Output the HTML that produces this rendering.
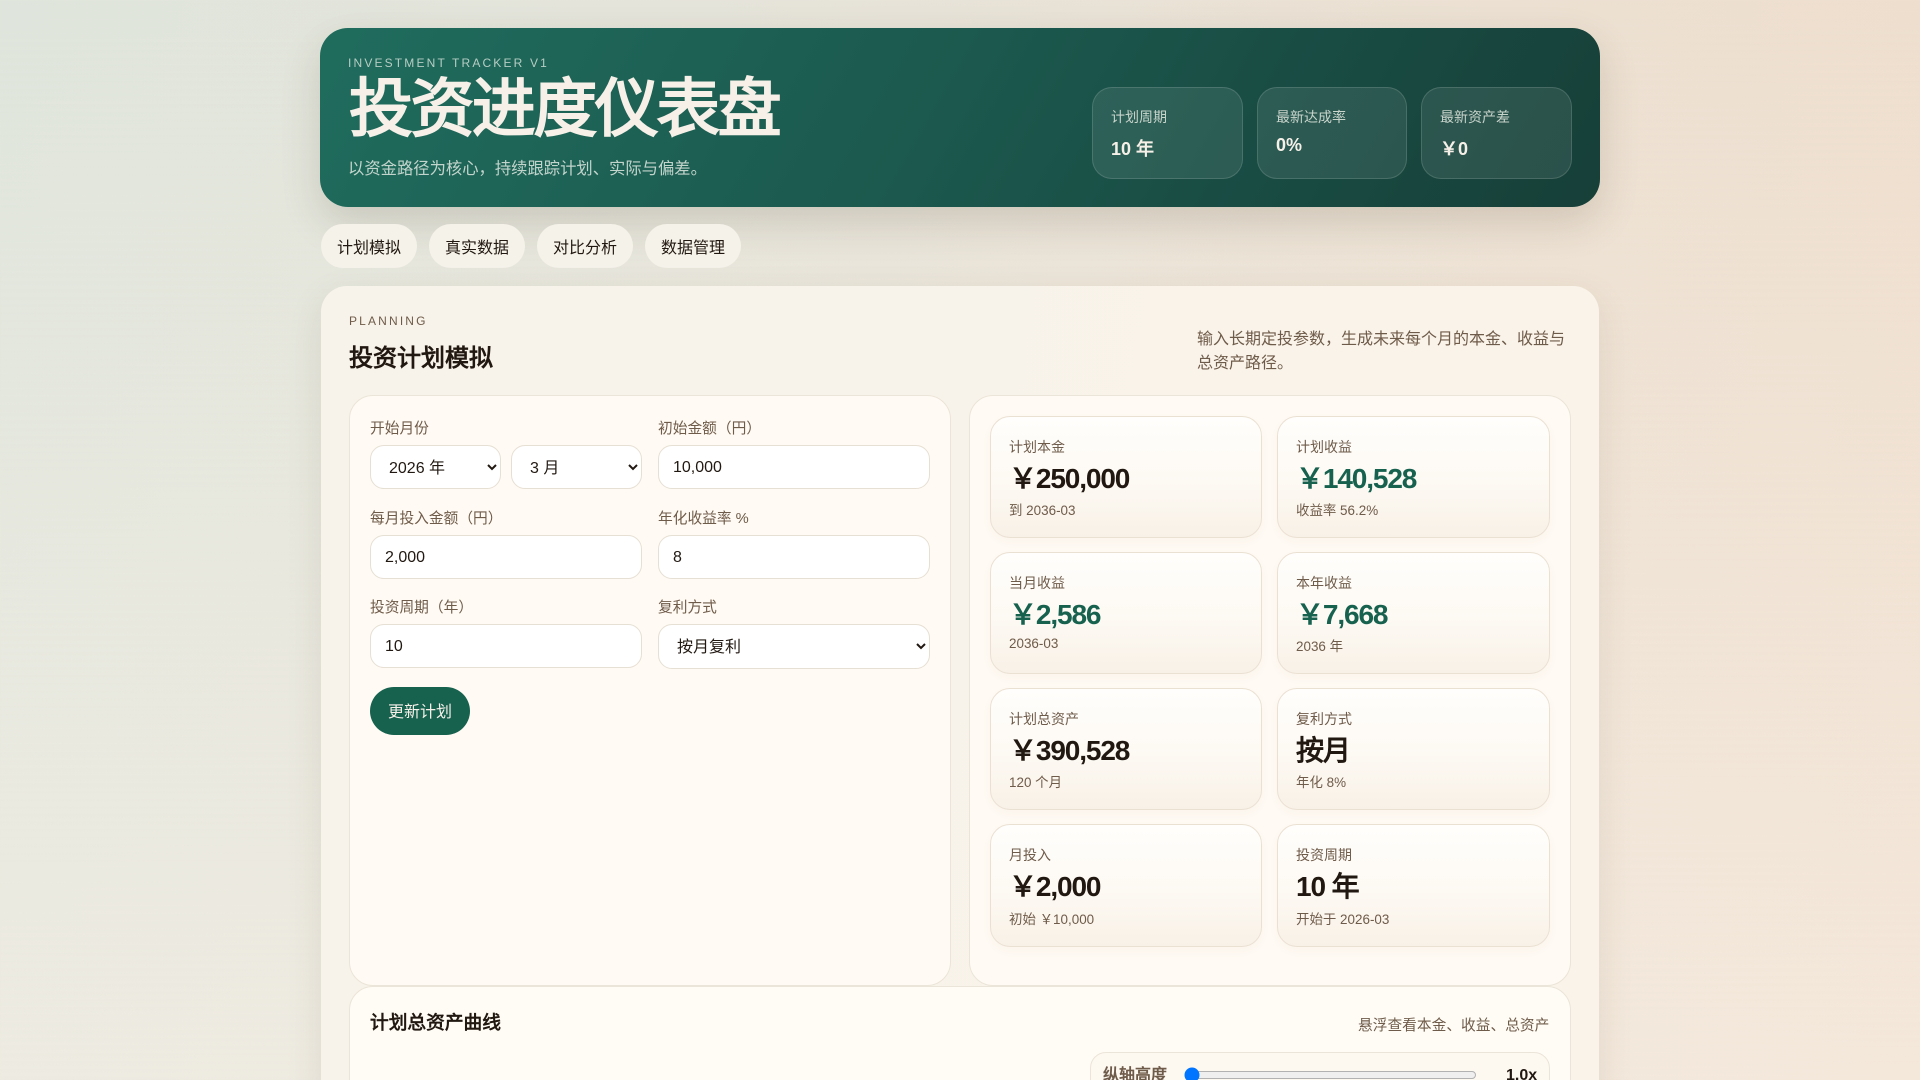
<!DOCTYPE html>
<html lang="zh-CN"><head><meta charset="utf-8"><title>投资进度仪表盘</title>
<style>
*{box-sizing:border-box}
html,body{margin:0;padding:0;width:1920px;height:1080px;overflow:hidden}
body{font-family:"Liberation Sans","WenQuanYi Zen Hei",sans-serif;color:#211811;font-size:16px;background:linear-gradient(180deg,rgba(248,240,230,0) 0%,rgba(248,240,230,.55) 100%),linear-gradient(95deg,#dfe5dc 0%,#e5e4da 35%,#e9e2d6 55%,#efdecd 100%);position:relative}
.abs,.abs>*{margin:0}
.abs{position:absolute}
.hero{left:320px;top:28px;width:1280px;height:179px;border-radius:28px;background:linear-gradient(120deg,#1f6c5d 0%,#1c5a4f 45%,#163f38 100%);box-shadow:0 16px 40px rgba(60,50,30,.16)}
.eyebrow{left:348px;top:56px;font-size:12px;letter-spacing:.18em;color:#b7cdc4;line-height:14px;white-space:nowrap}
h1.abs{left:349px;top:73px;font-size:64px;line-height:72px;letter-spacing:-.04em;font-weight:700;color:#f6f0e8;white-space:nowrap;margin:0}
.sub{left:348px;top:157px;font-size:16.32px;line-height:24px;color:#c3d4cc;white-space:nowrap}
.stat{top:87px;height:92px;width:151px;border-radius:20px;background:rgba(255,255,255,.085);border:1px solid rgba(255,255,255,.14);padding:19px 18px;color:#f6f0e8}
.stat .l{font-size:14px;color:#c9d4cb;margin-bottom:8px}
.stat .v{font-size:18px;font-weight:700}
.tab{top:224px;height:44px;width:96px;border-radius:22px;background:#f5f2ea;text-align:center;font-size:16px;line-height:50px;color:#211811}
.panel{left:321px;top:286px;width:1278px;height:830px;border-radius:26px;background:linear-gradient(100deg,#f7f3ea,#faf3e9);box-shadow:0 12px 36px rgba(80,60,30,.1)}
.pl{left:349px;top:314px;font-size:12px;letter-spacing:.18em;line-height:14px;color:#6f5b49;white-space:nowrap}
h2.abs{left:349px;top:341px;font-size:24px;line-height:36px;font-weight:700;margin:0;color:#211811;white-space:nowrap}
.desc{left:1197px;top:328px;width:372px;line-height:24px;color:#6f5b49;font-size:16px}
.card{background:#fffaf3;border:1px solid #ebe4d8;border-radius:24px}
.lab{font-size:14.72px;color:#6f5b49;line-height:20px;white-space:nowrap}
select,input[type=text]{position:absolute;font-family:inherit;font-size:16px;color:#211811;background:#fff;border:1px solid #e6dfd4;border-radius:14px;margin:0}
input[type=text]{padding:2px 14px 0}
select{padding:2px 10px 0 14px}
.btn{left:370px;top:687px;width:100px;height:48px;border-radius:24px;background:#17614f;color:#f6f0e8;font-size:16px;line-height:51px;text-align:center}
.m{width:272px;height:122px;border-radius:20px;border:1px solid #ebe1d3;background:linear-gradient(180deg,#fffefc 0%,#fdf9f3 55%,#f8f1e7 100%);padding:18px;box-shadow:0 4px 10px rgba(90,70,40,.03)}
.m .l{font-size:14px;color:#6f5b49;line-height:20px;margin-top:2px;white-space:nowrap}
.m .v{font-size:28px;font-weight:700;letter-spacing:-.04em;line-height:40px;margin-top:2px;color:#211811;white-space:nowrap}
.m .v.g{color:#17614f}
.m .s{font-size:13.44px;color:#6f5b49;line-height:20px;margin-top:2px;white-space:nowrap}
.m .s.lat{margin-top:-1px}
</style></head><body>
<div class="abs hero"></div>
<div class="abs eyebrow">INVESTMENT TRACKER V1</div>
<h1 class="abs">投资进度仪表盘</h1>
<div class="abs sub">以资金路径为核心，持续跟踪计划、实际与偏差。</div>
<div class="abs stat" style="left:1092px"><div class="l">计划周期</div><div class="v">10 年</div></div>
<div class="abs stat" style="left:1257px;width:150px"><div class="l">最新达成率</div><div class="v">0%</div></div>
<div class="abs stat" style="left:1421px"><div class="l">最新资产差</div><div class="v">￥0</div></div>
<div class="abs tab" style="left:321px">计划模拟</div>
<div class="abs tab" style="left:429px">真实数据</div>
<div class="abs tab" style="left:537px">对比分析</div>
<div class="abs tab" style="left:645px">数据管理</div>
<div class="abs panel"></div>
<div class="abs pl">PLANNING</div>
<h2 class="abs">投资计划模拟</h2>
<div class="abs desc">输入长期定投参数，生成未来每个月的本金、收益与总资产路径。</div>
<div class="abs card" style="left:349px;top:395px;width:602px;height:591px"></div>
<div class="abs card" style="left:969px;top:395px;width:602px;height:591px"></div>
<div class="abs lab" style="left:370px;top:419px">开始月份</div>
<select style="left:370px;top:445px;width:131px;height:44px"><option>2026 年</option></select>
<select style="left:511px;top:445px;width:131px;height:44px"><option>3 月</option></select>
<div class="abs lab" style="left:658px;top:419px">初始金额（円）</div>
<input type="text" value="10,000" style="left:658px;top:445px;width:272px;height:44px">
<div class="abs lab" style="left:370px;top:509px">每月投入金额（円）</div>
<input type="text" value="2,000" style="left:370px;top:535px;width:272px;height:44px">
<div class="abs lab" style="left:658px;top:509px">年化收益率 %</div>
<input type="text" value="8" style="left:658px;top:535px;width:272px;height:44px">
<div class="abs lab" style="left:370px;top:598px">投资周期（年）</div>
<input type="text" value="10" style="left:370px;top:624px;width:272px;height:44px">
<div class="abs lab" style="left:658px;top:598px">复利方式</div>
<select style="left:658px;top:624px;width:272px;height:45px"><option>按月复利</option></select>
<div class="abs btn">更新计划</div>
<div class="abs m" style="left:990px;top:416px"><div class="l">计划本金</div><div class="v">￥250,000</div><div class="s">到 2036-03</div></div>
<div class="abs m" style="left:1277px;width:273px;top:416px"><div class="l">计划收益</div><div class="v g">￥140,528</div><div class="s">收益率 56.2%</div></div>
<div class="abs m" style="left:990px;top:552px"><div class="l">当月收益</div><div class="v g">￥2,586</div><div class="s lat">2036-03</div></div>
<div class="abs m" style="left:1277px;width:273px;top:552px"><div class="l">本年收益</div><div class="v g">￥7,668</div><div class="s">2036 年</div></div>
<div class="abs m" style="left:990px;top:688px"><div class="l">计划总资产</div><div class="v">￥390,528</div><div class="s">120 个月</div></div>
<div class="abs m" style="left:1277px;width:273px;top:688px"><div class="l">复利方式</div><div class="v">按月</div><div class="s">年化 8%</div></div>
<div class="abs m" style="left:990px;top:824px;height:123px"><div class="l">月投入</div><div class="v">￥2,000</div><div class="s" style="margin-top:3px">初始 ￥10,000</div></div>
<div class="abs m" style="left:1277px;width:273px;top:824px;height:123px"><div class="l">投资周期</div><div class="v">10 年</div><div class="s" style="margin-top:3px">开始于 2026-03</div></div>
<div class="abs card" style="left:349px;top:986px;width:1222px;height:200px;background:#fffcf6"></div>
<div class="abs" style="left:370px;top:1009px;font-size:18.72px;font-weight:700;line-height:28px;white-space:nowrap">计划总资产曲线</div>
<div class="abs" style="left:1358px;top:1015px;font-size:14.72px;line-height:22px;color:#6f5b49;white-space:nowrap">悬浮查看本金、收益、总资产</div>
<div class="abs" style="left:1090px;top:1052px;width:460px;height:60px;background:#fdf8f0;border:1px solid #ebe4d8;border-radius:16px"></div>
<div class="abs" style="left:1103px;top:1064px;font-size:16px;font-weight:700;line-height:24px;color:#6f5b49;white-space:nowrap">纵轴高度</div>
<input class="abs" type="range" min="1" max="3" step="0.1" value="1" style="left:1184px;top:1067px;width:293px;height:16px;margin:0">
<div class="abs" style="left:1506px;top:1066px;font-size:16px;font-weight:700;line-height:20px;white-space:nowrap">1.0x</div>
</body></html>
